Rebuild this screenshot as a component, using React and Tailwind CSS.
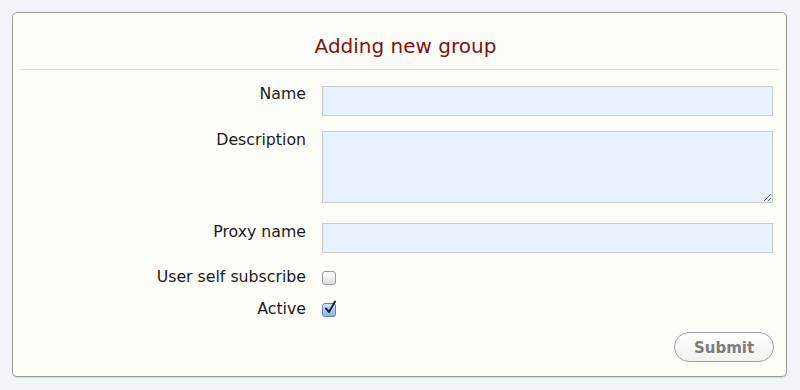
export default function App() {
    const font = { fontFamily: '"DejaVu Sans", Verdana, sans-serif' };

    return (
        <div className="min-h-screen w-[800px] h-[390px] bg-[#f2f5f8] pt-[12px] pl-[12px]" style={font}>
            <div className="w-[775px] rounded-[5px] border border-[#9c9c9c] bg-[#fdfdf8] pb-[14px] shadow-[0_1px_1px_rgba(0,0,0,0.12)]">
                <div className="pt-[21px] pb-[11px] pl-[12px] text-center text-[20px] leading-6 text-[#7d1214]">Adding new group</div>
                <div className="mx-[7px] border-b border-[#dedede]" />

                <form className="mt-[14px] flex flex-col pr-[13px] text-[15.75px] leading-5 text-[#1a1a1a]">
                    <div className="flex items-start gap-4">
                        <label className="w-[293px] shrink-0 text-right">Name</label>
                        <input className="mt-[2px] h-[30px] flex-1 border border-[#c9cbcc] bg-[#e7f2fe] outline-none" />
                    </div>

                    <div className="mt-[14px] flex items-start gap-4">
                        <label className="w-[293px] shrink-0 text-right">Description</label>
                        <textarea className="mt-[1px] h-[72px] flex-1 border border-[#c9cbcc] bg-[#e7f2fe] outline-none" />
                    </div>

                    <div className="mt-[19px] flex items-start gap-4">
                        <label className="w-[293px] shrink-0 text-right">Proxy name</label>
                        <input className="mt-[1px] h-[30px] flex-1 border border-[#c9cbcc] bg-[#e7f2fe] outline-none" />
                    </div>

                    <div className="mt-[14px] flex items-start gap-4">
                        <label className="w-[293px] shrink-0 text-right">User self subscribe</label>
                        <span className="mt-[4px] h-[14px] w-[14px] rounded-[3px] border border-[#9a9a9a] bg-gradient-to-b from-white to-[#dcdcdc]" />
                    </div>

                    <div className="mt-[12px] flex items-start gap-4">
                        <label className="w-[293px] shrink-0 text-right">Active</label>
                        <span className="relative mt-[4px] h-[14px] w-[14px] rounded-[3px] border border-[#5f84b3] bg-gradient-to-b from-[#d6e8fc] to-[#86b4ec]">
                            <svg className="absolute -top-[4px] left-[1px]" width="13" height="15" viewBox="0 0 13 15">
                                <path d="M2 8.5 L5 12 L11 1.5" fill="none" stroke="#16243f" strokeWidth="2" strokeLinecap="round" strokeLinejoin="round" />
                            </svg>
                        </span>
                    </div>

                    <div className="mt-[13px] flex justify-end">
                        <button
                            type="button"
                            className="-mr-[1px] h-[30px] w-[100px] rounded-full border border-[#a3a3a3] bg-gradient-to-b from-white to-[#f1f1ee] pt-[2px] text-[15px] font-bold text-[#7c7c7c]"
                        >
                            Submit
                        </button>
                    </div>
                </form>
            </div>
        </div>
    );
}
